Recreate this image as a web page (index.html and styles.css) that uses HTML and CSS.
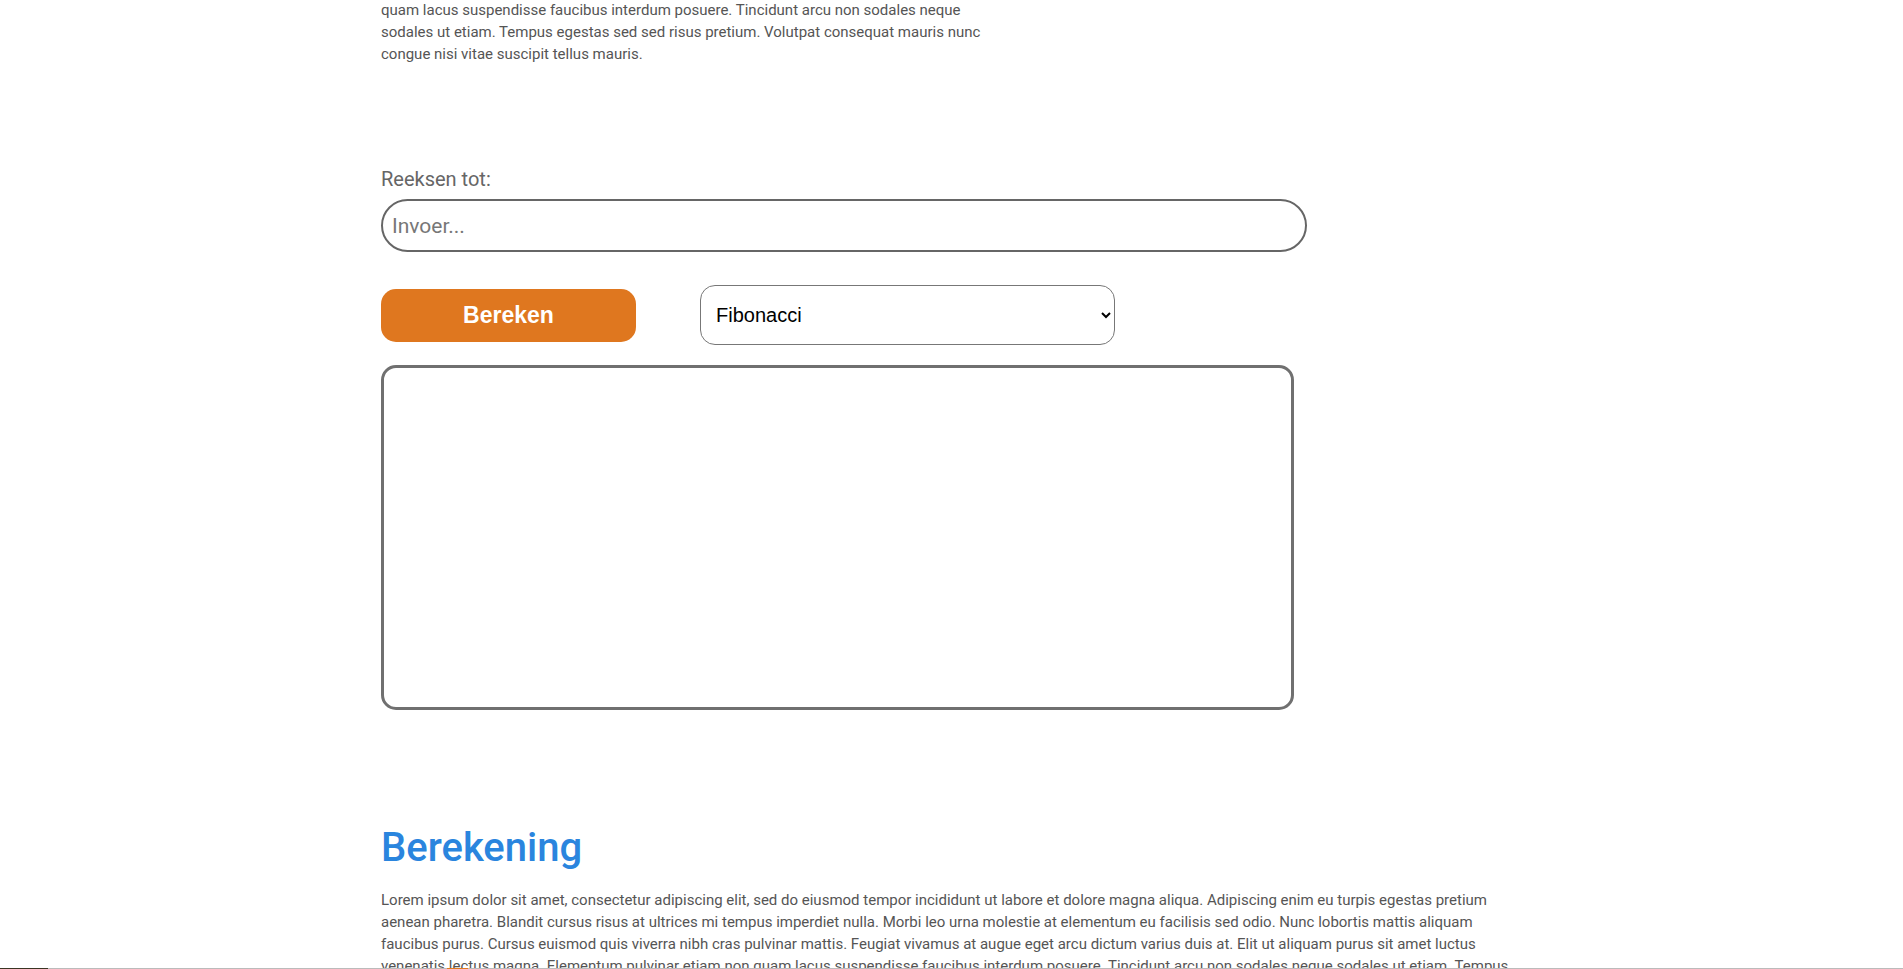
FILE: index.html
```html
<!DOCTYPE html>
<html lang="nl">
<head>
<meta charset="utf-8">
<title>Reeksen</title>
<link rel="stylesheet" href="styles.css">
</head>
<body>
<main class="container">
  <p class="intro">quam lacus suspendisse faucibus interdum posuere. Tincidunt arcu non sodales neque sodales ut etiam. Tempus egestas sed sed risus pretium. Volutpat consequat mauris nunc congue nisi vitae suscipit tellus mauris.</p>

  <section class="calc">
    <label class="label" for="invoer">Reeksen tot:</label>
    <input class="invoer" id="invoer" type="text" placeholder="Invoer...">
    <div class="row">
      <button class="btn" type="button">Bereken</button>
      <select class="keuze">
        <option>Fibonacci</option>
        <option>Priemgetallen</option>
        <option>Kwadraten</option>
      </select>
    </div>
    <div class="output"></div>
  </section>

  <section class="uitleg">
    <h2 class="title">Berekening</h2>
    <p class="text">Lorem ipsum dolor sit amet, consectetur adipiscing elit, sed do eiusmod tempor incididunt ut labore et dolore magna aliqua. Adipiscing enim eu turpis egestas pretium aenean pharetra. Blandit cursus risus at ultrices mi tempus imperdiet nulla. Morbi leo urna molestie at elementum eu facilisis sed odio. Nunc lobortis mattis aliquam faucibus purus. Cursus euismod quis viverra nibh cras pulvinar mattis. Feugiat vivamus at augue eget arcu dictum varius duis at. Elit ut aliquam purus sit amet luctus venenatis lectus magna. Elementum pulvinar etiam non quam lacus suspendisse faucibus interdum posuere. Tincidunt arcu non sodales neque sodales ut etiam. Tempus egestas sed sed risus pretium. Volutpat consequat mauris nunc congue nisi vitae suscipit tellus mauris.</p>
  </section>
</main>
<div class="bottombar"><span class="seg-dark"></span><span class="seg-orange"></span></div>
</body>
</html>
```

FILE: styles.css
```css
html, body {
  margin: 0;
  padding: 0;
  background: #fff;
  overflow: hidden;
}

body {
  font-family: Roboto, "Liberation Sans", Arial, sans-serif;
  color: #555;
}

.container {
  width: 1141px;
  margin: 0 auto;
}

.intro {
  width: 610px;
  margin: -1px 0 0 0;
  font-size: 15px;
  line-height: 22px;
  color: #555;
}

.calc {
  margin-top: 102px;
  display: flex;
  flex-direction: column;
  align-items: flex-start;
}

.label {
  font-size: 20px;
  line-height: 24px;
  color: #666;
}

.invoer {
  margin-top: 8px;
  width: 926px;
  height: 53px;
  box-sizing: border-box;
  border: 2px solid #666;
  border-radius: 27px;
  padding: 0 9px;
  font-family: Roboto, "Liberation Sans", Arial, sans-serif;
  font-size: 21px;
  color: #333;
  outline: none;
  background: #fff;
}

.invoer::placeholder {
  color: #777;
}

.row {
  margin-top: 33px;
  display: flex;
  align-items: center;
  gap: 64px;
  height: 60px;
}

.btn {
  width: 255px;
  height: 53px;
  border: none;
  border-radius: 15px;
  background: #df771f;
  color: #fff;
  font-family: "Liberation Sans", Arial, sans-serif;
  font-weight: bold;
  font-size: 23px;
  cursor: pointer;
}

.keuze {
  width: 415px;
  height: 60px;
  box-sizing: border-box;
  border: 1px solid #777;
  border-radius: 15px;
  background: #fff;
  padding: 0 0 0 11px;
  font-family: "Liberation Sans", Arial, sans-serif;
  font-size: 20px;
  color: #000;
}

.output {
  margin-top: 20px;
  width: 913px;
  height: 345px;
  box-sizing: border-box;
  border: 3px solid #707070;
  border-radius: 15px;
}

.uitleg {
  margin-top: 113px;
}

.title {
  margin: 0;
  font-size: 40px;
  line-height: 50px;
  font-weight: 500;
  color: #2a85de;
}

.text {
  margin: 16px 0 0 0;
  font-size: 15px;
  line-height: 22px;
  color: #555;
}

.bottombar {
  position: fixed;
  left: 0;
  right: 0;
  bottom: 0;
  height: 1px;
  background: #bbb;
}

.seg-dark {
  position: absolute;
  left: 0;
  top: 0;
  width: 48px;
  height: 1px;
  background: #3a3524;
}

.seg-orange {
  position: absolute;
  left: 447px;
  top: 0;
  width: 21px;
  height: 1px;
  background: #e07a1f;
}
```
